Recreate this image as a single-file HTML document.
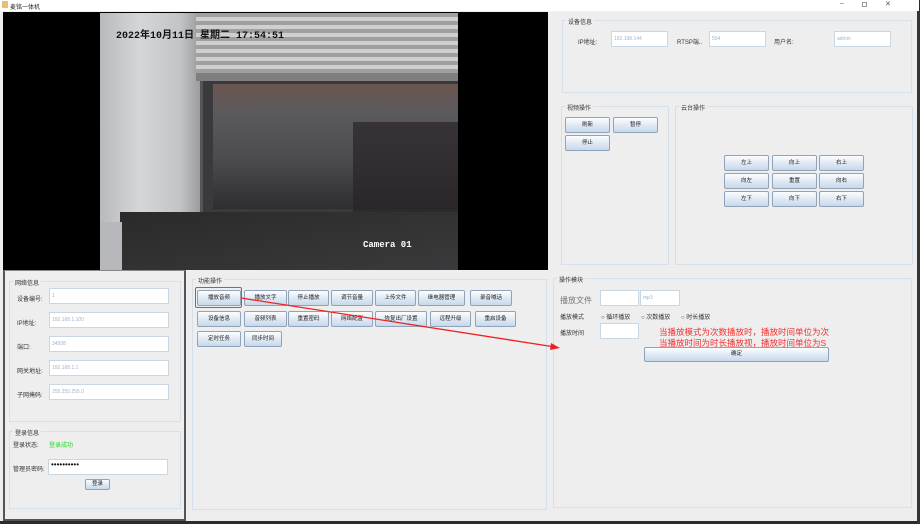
<!DOCTYPE html>
<html><head><meta charset="utf-8"><style>
*{margin:0;padding:0;box-sizing:border-box}
body{width:920px;height:524px;overflow:hidden;background:#2b2b2b;font-family:"Liberation Sans","Noto Sans CJK SC",sans-serif;font-size:6px;color:#222;position:relative}
.a{position:absolute}
.win{left:0;top:0;width:919px;height:521px;background:#eeeeee}
.grp{position:absolute;border:1px solid #d6e0ea}
.gt{position:absolute;font-size:6px;background:#eeeeee;padding:0 2px;top:-4px;left:3px;color:#333}
.in{position:absolute;background:#fff;border:1px solid #c9d6e4;font-size:5px;color:#9fb3cc;padding:4px 2px;line-height:6px}
.lb{position:absolute;font-size:6px;color:#333}
.btn{position:absolute;border:1px solid #8fa3bb;background:linear-gradient(#fbfdff,#dbe6f2 60%,#c8d8ea);border-radius:2px;font-size:5.5px;text-align:center;color:#222}
</style></head><body>
<div class="a win"></div>
<div class="a" style="left:0;top:0;width:919px;height:11px;background:#fff"></div>
<div class="a" style="left:2px;top:1px;width:6px;height:7px;background:#e8c070"></div>
<div class="a" style="left:10px;top:2px;font-size:6px">麦铭一体机</div>
<div class="a" style="left:840px;top:0px;font-size:7px;color:#555">–</div>
<div class="a" style="left:862px;top:2px;width:5px;height:5px;border:1px solid #999"></div>
<div class="a" style="left:885px;top:0px;font-size:7px;color:#555">✕</div>
<div class="a" style="left:917px;top:11px;width:3px;height:513px;background:#333"></div>

<!-- video -->
<div class="a" style="left:3px;top:12px;width:545px;height:258px;background:#000;overflow:hidden">
 <div class="a" style="left:97px;top:1px;width:358px;height:257px;background:#555"></div>
 <div class="a" style="left:97px;top:1px;width:100px;height:257px;background:linear-gradient(90deg,#b8babe,#d4d6da 40%,#c2c4c8 80%,#9a9ca0)"></div>
 <div class="a" style="left:193px;top:1px;width:262px;height:60px;background:repeating-linear-gradient(180deg,#a0a0a0 0 4px,#cfcfcf 4px 8px)"></div>
 <div class="a" style="left:193px;top:61px;width:262px;height:8px;background:#7e7e7e"></div>
 <div class="a" style="left:200px;top:69px;width:255px;height:165px;background:#3a3a3c"></div>
 <div class="a" style="left:210px;top:72px;width:245px;height:125px;background:linear-gradient(180deg,#6a5650,#5a5a5e 25%,#4c4c50 60%,#2e2e30)"></div>
 <div class="a" style="left:350px;top:110px;width:105px;height:110px;background:#2a2226;opacity:.7"></div>
 <div class="a" style="left:117px;top:200px;width:338px;height:58px;background:linear-gradient(170deg,#2a2a2a,#3a3a3c)"></div>
 <div class="a" style="left:97px;top:210px;width:22px;height:48px;background:#b6b8bc"></div>
 <div class="a" style="left:113px;top:14px;font-family:'Liberation Mono','Noto Sans CJK SC',monospace;font-size:10px;color:#111;font-weight:bold">2022年10月11日 星期二 17:54:51</div>
 <div class="a" style="left:360px;top:228px;font-family:'Liberation Mono',monospace;font-size:9px;color:#fff;font-weight:bold">Camera 01</div>
</div>

<!-- top right group -->
<div class="grp" style="left:562px;top:20px;width:350px;height:73px"><span class="gt">设备信息</span></div>
<div class="lb" style="left:578px;top:37px">IP地址:</div>
<div class="in" style="left:611px;top:31px;width:57px;height:16px">192.168.144</div>
<div class="lb" style="left:677px;top:37px">RTSP端..</div>
<div class="in" style="left:709px;top:31px;width:57px;height:16px">554</div>
<div class="lb" style="left:774px;top:37px">用户名:</div>
<div class="in" style="left:834px;top:31px;width:57px;height:16px">admin</div>

<div class="grp" style="left:561px;top:106px;width:108px;height:159px"><span class="gt">视频操作</span></div>
<div class="btn" style="left:565px;top:117px;width:45px;height:16px;line-height:14px">刷新</div>
<div class="btn" style="left:613px;top:117px;width:45px;height:16px;line-height:14px">暂停</div>
<div class="btn" style="left:565px;top:135px;width:45px;height:16px;line-height:14px">停止</div>

<div class="grp" style="left:675px;top:106px;width:238px;height:159px"><span class="gt">云台操作</span></div>
<div class="btn" style="left:724px;top:155px;width:45px;height:16px;line-height:14px">左上</div>
<div class="btn" style="left:772px;top:155px;width:45px;height:16px;line-height:14px">向上</div>
<div class="btn" style="left:819px;top:155px;width:45px;height:16px;line-height:14px">右上</div>
<div class="btn" style="left:724px;top:173px;width:45px;height:16px;line-height:14px">向左</div>
<div class="btn" style="left:772px;top:173px;width:45px;height:16px;line-height:14px">重置</div>
<div class="btn" style="left:819px;top:173px;width:45px;height:16px;line-height:14px">向右</div>
<div class="btn" style="left:724px;top:191px;width:45px;height:16px;line-height:14px">左下</div>
<div class="btn" style="left:772px;top:191px;width:45px;height:16px;line-height:14px">向下</div>
<div class="btn" style="left:819px;top:191px;width:45px;height:16px;line-height:14px">右下</div>

<!-- left bottom panel -->
<div class="a" style="left:3px;top:270px;width:183px;height:251px;border:2px solid #555;border-top:1px solid #888"></div>
<div class="grp" style="left:9px;top:281px;width:172px;height:141px"><span class="gt">网络信息</span></div>
<div class="lb" style="left:17px;top:294px">设备编号:</div>
<div class="in" style="left:49px;top:288px;width:120px;height:16px">1</div>
<div class="lb" style="left:17px;top:318px">IP地址:</div>
<div class="in" style="left:49px;top:312px;width:120px;height:16px">192.168.1.100</div>
<div class="lb" style="left:17px;top:342px">端口:</div>
<div class="in" style="left:49px;top:336px;width:120px;height:16px">34508</div>
<div class="lb" style="left:17px;top:366px">网关地址:</div>
<div class="in" style="left:49px;top:360px;width:120px;height:16px">192.168.1.1</div>
<div class="lb" style="left:17px;top:390px">子网掩码:</div>
<div class="in" style="left:49px;top:384px;width:120px;height:16px">255.255.255.0</div>
<div class="grp" style="left:9px;top:431px;width:172px;height:78px"><span class="gt">登录信息</span></div>
<div class="lb" style="left:13px;top:440px">登录状态:</div>
<div class="lb" style="left:49px;top:440px;color:#22dd22">登录成功</div>
<div class="lb" style="left:13px;top:464px">管理员密码:</div>
<div class="in" style="left:48px;top:459px;width:120px;height:16px;color:#111;font-size:8px;padding:2px">••••••••••</div>
<div class="btn" style="left:85px;top:479px;width:25px;height:11px;line-height:9px">登录</div>

<!-- center group -->
<div class="grp" style="left:192px;top:279px;width:355px;height:231px"><span class="gt">功能操作</span></div>
<div class="btn" style="left:197px;top:290px;width:44px;height:16px;line-height:14px">播放音频</div>
<div class="btn" style="left:244px;top:290px;width:43px;height:16px;line-height:14px">播放文字</div>
<div class="btn" style="left:288px;top:290px;width:41px;height:16px;line-height:14px">停止播放</div>
<div class="btn" style="left:331px;top:290px;width:42px;height:16px;line-height:14px">调节音量</div>
<div class="btn" style="left:375px;top:290px;width:41px;height:16px;line-height:14px">上传文件</div>
<div class="btn" style="left:418px;top:290px;width:47px;height:16px;line-height:14px">继电器管理</div>
<div class="btn" style="left:470px;top:290px;width:42px;height:16px;line-height:14px">录音喊话</div>
<div class="btn" style="left:197px;top:311px;width:44px;height:16px;line-height:14px">设备信息</div>
<div class="btn" style="left:244px;top:311px;width:43px;height:16px;line-height:14px">音频列表</div>
<div class="btn" style="left:288px;top:311px;width:41px;height:16px;line-height:14px">重置密码</div>
<div class="btn" style="left:331px;top:311px;width:42px;height:16px;line-height:14px">网络配置</div>
<div class="btn" style="left:375px;top:311px;width:52px;height:16px;line-height:14px">恢复出厂设置</div>
<div class="btn" style="left:430px;top:311px;width:41px;height:16px;line-height:14px">远程升级</div>
<div class="btn" style="left:475px;top:311px;width:41px;height:16px;line-height:14px">重启设备</div>
<div class="btn" style="left:197px;top:331px;width:44px;height:16px;line-height:14px">定时任务</div>
<div class="btn" style="left:244px;top:331px;width:38px;height:16px;line-height:14px">同步时间</div>
<div class="a" style="left:195px;top:287px;width:47px;height:21px;border:1.5px solid #f03c3c;border-radius:2px"></div>

<!-- right bottom group -->
<div class="grp" style="left:553px;top:278px;width:359px;height:230px"><span class="gt">操作模块</span></div>
<div class="lb" style="left:560px;top:295px;font-size:8px;color:#777">播放文件</div>
<div class="in" style="left:600px;top:290px;width:39px;height:16px"></div>
<div class="in" style="left:640px;top:290px;width:40px;height:16px">mp3</div>
<div class="lb" style="left:560px;top:312px">播放模式</div>
<div class="lb" style="left:601px;top:312px">○ 循环播放</div>
<div class="lb" style="left:641px;top:312px">○ 次数播放</div>
<div class="lb" style="left:681px;top:312px">○ 时长播放</div>
<div class="lb" style="left:560px;top:328px">播放时间</div>
<div class="in" style="left:600px;top:323px;width:39px;height:16px"></div>
<div class="lb" style="left:659px;top:326px;font-size:8.5px;color:#f03030;white-space:nowrap">当播放模式为次数播放时，播放时间单位为次</div>
<div class="lb" style="left:659px;top:337px;font-size:8.5px;color:#f03030;white-space:nowrap">当播放时间为时长播放视，播放时间单位为S</div>
<div class="btn" style="left:644px;top:347px;width:185px;height:15px;line-height:13px">确定</div>

<svg class="a" style="left:0;top:0" width="920" height="524"><line x1="241" y1="298" x2="555" y2="347" stroke="#f02020" stroke-width="1.3"/><polygon points="560,348 551,343 550,350" fill="#f02020"/></svg>
</body></html>
